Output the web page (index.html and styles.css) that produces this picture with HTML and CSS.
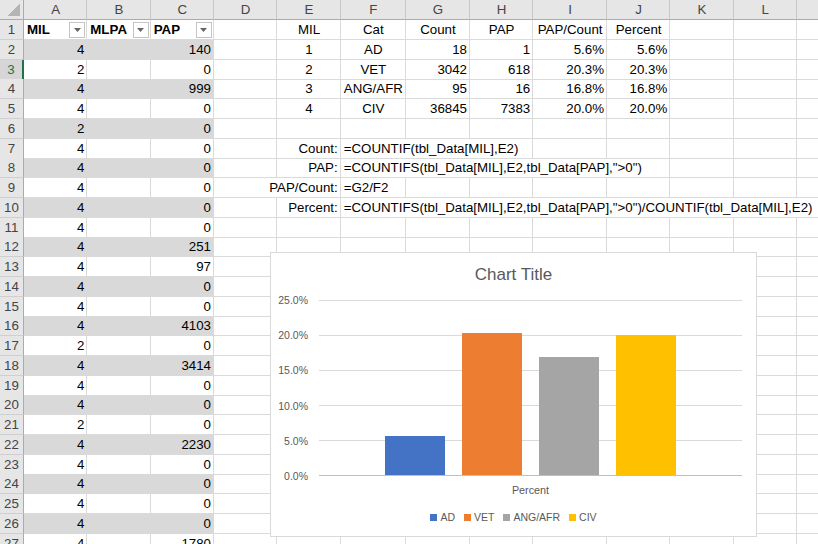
FILE: index.html
```html
<!DOCTYPE html>
<html>
<head>
<meta charset="utf-8">
<title>Sheet</title>
<link rel="stylesheet" href="styles.css">
</head>
<body>
<div class="sheet">
  <div class="row hdr">
    <div class="corner"></div><div>A</div><div>B</div><div>C</div><div>D</div><div>E</div><div>F</div><div>G</div><div>H</div><div>I</div><div>J</div><div>K</div><div>L</div><div>M</div>
  </div>
  <div class="row">
    <div class="rh">1</div>
    <div class="th">MIL<span class="fb"><svg width="7" height="4" viewBox="0 0 7 4"><path d="M0 0H7L3.5 4Z" fill="#666"/></svg></span></div>
    <div class="th">MLPA<span class="fb"><svg width="7" height="4" viewBox="0 0 7 4"><path d="M0 0H7L3.5 4Z" fill="#666"/></svg></span></div>
    <div class="th">PAP<span class="fb"><svg width="7" height="4" viewBox="0 0 7 4"><path d="M0 0H7L3.5 4Z" fill="#666"/></svg></span></div>
    <div></div><div class="m">MIL</div><div class="m">Cat</div><div class="m">Count</div><div class="m">PAP</div><div class="m">PAP/Count</div><div class="m">Percent</div><div></div><div></div><div></div>
  </div>
  <div class="row band">
    <div class="rh">2</div><div class="t r">4</div><div class="t"></div><div class="t r">140</div>
    <div></div><div class="m">1</div><div class="m">AD</div><div class="r">18</div><div class="r">1</div><div class="r">5.6%</div><div class="r">5.6%</div><div></div><div></div><div></div>
  </div>
  <div class="row">
    <div class="rh act">3</div><div class="t r">2</div><div class="t"></div><div class="t r">0</div>
    <div></div><div class="m">2</div><div class="m">VET</div><div class="r">3042</div><div class="r">618</div><div class="r">20.3%</div><div class="r">20.3%</div><div></div><div></div><div></div>
  </div>
  <div class="row band">
    <div class="rh">4</div><div class="t r">4</div><div class="t"></div><div class="t r">999</div>
    <div></div><div class="m">3</div><div class="m">ANG/AFR</div><div class="r">95</div><div class="r">16</div><div class="r">16.8%</div><div class="r">16.8%</div><div></div><div></div><div></div>
  </div>
  <div class="row">
    <div class="rh">5</div><div class="t r">4</div><div class="t"></div><div class="t r">0</div>
    <div></div><div class="m">4</div><div class="m">CIV</div><div class="r">36845</div><div class="r">7383</div><div class="r">20.0%</div><div class="r">20.0%</div><div></div><div></div><div></div>
  </div>
  <div class="row band">
    <div class="rh">6</div><div class="t r">2</div><div class="t"></div><div class="t r">0</div>
    <div></div><div></div><div></div><div></div><div></div><div></div><div></div><div></div><div></div><div></div>
  </div>
  <div class="row">
    <div class="rh">7</div><div class="t r">4</div><div class="t"></div><div class="t r">0</div>
    <div></div><div class="r">Count:</div><div class="s3">=COUNTIF(tbl_Data[MIL],E2)</div><div></div><div></div><div></div><div></div><div></div>
  </div>
  <div class="row band">
    <div class="rh">8</div><div class="t r">4</div><div class="t"></div><div class="t r">0</div>
    <div></div><div class="r">PAP:</div><div class="s5">=COUNTIFS(tbl_Data[MIL],E2,tbl_Data[PAP],&quot;&gt;0&quot;)</div><div></div><div></div><div></div>
  </div>
  <div class="row">
    <div class="rh">9</div><div class="t r">4</div><div class="t"></div><div class="t r">0</div>
    <div class="s2 r">PAP/Count:</div><div>=G2/F2</div><div></div><div></div><div></div><div></div><div></div><div></div><div></div>
  </div>
  <div class="row band">
    <div class="rh">10</div><div class="t r">4</div><div class="t"></div><div class="t r">0</div>
    <div></div><div class="r">Percent:</div><div class="s8">=COUNTIFS(tbl_Data[MIL],E2,tbl_Data[PAP],&quot;&gt;0&quot;)/COUNTIF(tbl_Data[MIL],E2)</div>
  </div>
  <div class="row">
    <div class="rh">11</div><div class="t r">4</div><div class="t"></div><div class="t r">0</div>
    <div></div><div></div><div></div><div></div><div></div><div></div><div></div><div></div><div></div><div></div>
  </div>
  <div class="row band">
    <div class="rh">12</div><div class="t r">4</div><div class="t"></div><div class="t r">251</div>
    <div></div><div></div><div></div><div></div><div></div><div></div><div></div><div></div><div></div><div></div>
  </div>
  <div class="row">
    <div class="rh">13</div><div class="t r">4</div><div class="t"></div><div class="t r">97</div>
    <div></div><div></div><div></div><div></div><div></div><div></div><div></div><div></div><div></div><div></div>
  </div>
  <div class="row band">
    <div class="rh">14</div><div class="t r">4</div><div class="t"></div><div class="t r">0</div>
    <div></div><div></div><div></div><div></div><div></div><div></div><div></div><div></div><div></div><div></div>
  </div>
  <div class="row">
    <div class="rh">15</div><div class="t r">4</div><div class="t"></div><div class="t r">0</div>
    <div></div><div></div><div></div><div></div><div></div><div></div><div></div><div></div><div></div><div></div>
  </div>
  <div class="row band">
    <div class="rh">16</div><div class="t r">4</div><div class="t"></div><div class="t r">4103</div>
    <div></div><div></div><div></div><div></div><div></div><div></div><div></div><div></div><div></div><div></div>
  </div>
  <div class="row">
    <div class="rh">17</div><div class="t r">2</div><div class="t"></div><div class="t r">0</div>
    <div></div><div></div><div></div><div></div><div></div><div></div><div></div><div></div><div></div><div></div>
  </div>
  <div class="row band">
    <div class="rh">18</div><div class="t r">4</div><div class="t"></div><div class="t r">3414</div>
    <div></div><div></div><div></div><div></div><div></div><div></div><div></div><div></div><div></div><div></div>
  </div>
  <div class="row">
    <div class="rh">19</div><div class="t r">4</div><div class="t"></div><div class="t r">0</div>
    <div></div><div></div><div></div><div></div><div></div><div></div><div></div><div></div><div></div><div></div>
  </div>
  <div class="row band">
    <div class="rh">20</div><div class="t r">4</div><div class="t"></div><div class="t r">0</div>
    <div></div><div></div><div></div><div></div><div></div><div></div><div></div><div></div><div></div><div></div>
  </div>
  <div class="row">
    <div class="rh">21</div><div class="t r">2</div><div class="t"></div><div class="t r">0</div>
    <div></div><div></div><div></div><div></div><div></div><div></div><div></div><div></div><div></div><div></div>
  </div>
  <div class="row band">
    <div class="rh">22</div><div class="t r">4</div><div class="t"></div><div class="t r">2230</div>
    <div></div><div></div><div></div><div></div><div></div><div></div><div></div><div></div><div></div><div></div>
  </div>
  <div class="row">
    <div class="rh">23</div><div class="t r">4</div><div class="t"></div><div class="t r">0</div>
    <div></div><div></div><div></div><div></div><div></div><div></div><div></div><div></div><div></div><div></div>
  </div>
  <div class="row band">
    <div class="rh">24</div><div class="t r">4</div><div class="t"></div><div class="t r">0</div>
    <div></div><div></div><div></div><div></div><div></div><div></div><div></div><div></div><div></div><div></div>
  </div>
  <div class="row">
    <div class="rh">25</div><div class="t r">4</div><div class="t"></div><div class="t r">0</div>
    <div></div><div></div><div></div><div></div><div></div><div></div><div></div><div></div><div></div><div></div>
  </div>
  <div class="row band">
    <div class="rh">26</div><div class="t r">4</div><div class="t"></div><div class="t r">0</div>
    <div></div><div></div><div></div><div></div><div></div><div></div><div></div><div></div><div></div><div></div>
  </div>
  <div class="row">
    <div class="rh">27</div><div class="t r">4</div><div class="t"></div><div class="t r">1780</div>
    <div></div><div></div><div></div><div></div><div></div><div></div><div></div><div></div><div></div><div></div>
  </div>

  <div class="chart">
    <div class="ctitle">Chart Title</div>
    <div class="cbody">
      <div class="yax">
        <span>25.0%</span><span>20.0%</span><span>15.0%</span><span>10.0%</span><span>5.0%</span><span>0.0%</span>
      </div>
      <div class="plot">
        <div class="glines"><i></i><i></i><i></i><i></i><i></i><i class="axis"></i></div>
        <div class="bars">
          <div class="bar ad" style="height:39.2px"></div>
          <div class="bar vet" style="height:142.1px"></div>
          <div class="bar ang" style="height:117.6px"></div>
          <div class="bar civ" style="height:140px"></div>
        </div>
      </div>
      <div></div>
      <div class="xlab">Percent</div>
    </div>
    <div class="legend">
      <span class="li"><b class="ad"></b>AD</span>
      <span class="li"><b class="vet"></b>VET</span>
      <span class="li"><b class="ang"></b>ANG/AFR</span>
      <span class="li"><b class="civ"></b>CIV</span>
    </div>
  </div>
</div>
</body>
</html>
```
FILE: styles.css
```css
* { box-sizing: border-box; margin: 0; padding: 0; }
html, body { width: 818px; height: 544px; overflow: hidden; background: #fff; }
body { font-family: "Liberation Sans", Arial, sans-serif; font-size: 13.3px; color: #000; }

.sheet { position: relative; width: 818px; height: 544px; overflow: hidden; }

.row {
  display: grid;
  grid-template-columns: 24px 63.3px 63.4px 63.3px 63.3px 63.4px 65.3px 64px 63.3px 73.7px 63.3px 63.3px 63.4px 64px;
  height: 19.76px;
}
.row > div {
  border-right: 1px solid #dadada;
  border-bottom: 1px solid #dadada;
  line-height: 19px;
  padding: 0 2px 0 3px;
  white-space: nowrap;
  overflow: visible;
}
.row > .r { text-align: right; }
.row > .m { text-align: center; }
.row > .s2 { grid-column: span 2; }
.row > .s3 { grid-column: span 3; }
.row > .s5 { grid-column: span 5; }
.row > .s8 { grid-column: span 8; }

.hdr { height: 20px; }
.hdr > div {
  background: #e6e6e6;
  border-right: 1px solid #c8c8c8;
  border-bottom: 1px solid #ababab;
  text-align: center;
  color: #444;
}
.hdr > .corner {
  background: linear-gradient(to bottom right, transparent 50%, #b4b4b4 50%) no-repeat right 3px bottom 3px / 12px 12px, #e6e6e6;
  border-right-color: #ababab;
}

.row > .rh {
  background: #e6e6e6;
  border-right: 1px solid #ababab;
  border-bottom: 1px solid #cfcfcf;
  text-align: center;
  color: #444;
  padding: 0;
}
.row > .rh.act {
  background: #d6d6d6;
  color: #217346;
  border-right: 2px solid #217346;
}

.row > .th {
  display: flex;
  align-items: center;
  justify-content: space-between;
  font-weight: bold;
  padding: 0 1px 0 3px;
}
.fb {
  width: 16px;
  height: 16px;
  border: 1px solid #c4c4c4;
  background: #fff;
  display: flex;
  align-items: center;
  justify-content: center;
}

.band > .t { background: #d9d9d9; border-color: #d9d9d9; }

/* Chart */
.chart {
  position: absolute;
  left: 270px;
  top: 252px;
  width: 487px;
  height: 285px;
  background: #fff;
  border: 1px solid #d9d9d9;
  color: #595959;
  display: flex;
  flex-direction: column;
  align-items: center;
}
.ctitle {
  margin-top: 12px;
  font-size: 17px;
  line-height: 20px;
  height: 20px;
}
.cbody {
  align-self: stretch;
  margin-top: 15px;
  display: grid;
  grid-template-columns: 48px 423px;
}
.yax {
  margin: -7px 0;
  padding-right: 11px;
  display: flex;
  flex-direction: column;
  justify-content: space-between;
  align-items: flex-end;
  font-size: 10.5px;
}
.yax span { line-height: 14px; height: 14px; }
.plot { display: grid; height: 176px; }
.plot > * { grid-area: 1 / 1; }
.glines {
  display: flex;
  flex-direction: column;
  justify-content: space-between;
}
.glines i { display: block; height: 1px; background: #d9d9d9; }
.glines i.axis { background: #bfbfbf; }
.bars {
  height: 175px;
  display: flex;
  align-items: flex-end;
  justify-content: center;
  gap: 16.7px;
}
.bar { width: 60px; }
.ad { background: #4472c4; }
.vet { background: #ed7d31; }
.ang { background: #a5a5a5; }
.civ { background: #ffc000; }
.xlab {
  margin-top: 7px;
  text-align: center;
  font-size: 10.8px;
  line-height: 14px;
}
.legend {
  margin-top: 13px;
  display: flex;
  gap: 9px;
  font-size: 10.5px;
  line-height: 14px;
}
.li { display: flex; align-items: center; }
.li b { display: block; width: 7px; height: 7px; margin-right: 3px; }
```
